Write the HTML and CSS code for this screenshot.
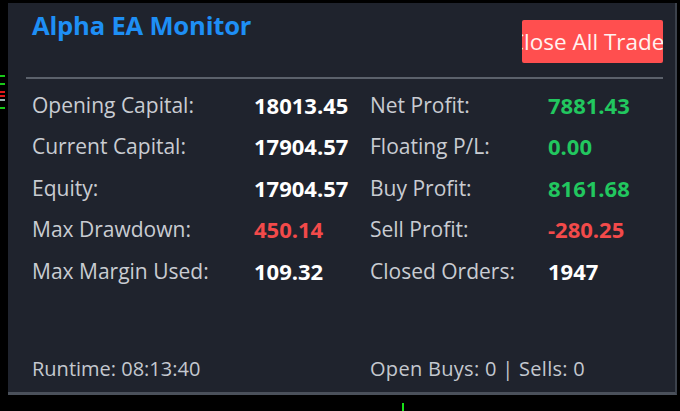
FILE: index.html
```html
<!DOCTYPE html>
<html>
<head>
<meta charset="utf-8">
<link rel="stylesheet" href="styles.css">
</head>
<body>
<div class="chart">
  <div class="ticks">
    <span class="tick g"></span>
    <span class="tick g"></span>
    <span class="tick r"></span>
    <span class="tick r"></span>
    <span class="tick w"></span>
    <span class="tick g"></span>
  </div>
  <div class="panel">
    <div class="header">
      <div class="title">Alpha EA Monitor</div>
      <div class="btn"><span>Close All Trades</span></div>
    </div>
    <div class="sep"></div>
    <div class="grid">
      <div class="lbl">Opening Capital:</div><div class="val">18013.45</div>
      <div class="lbl">Net Profit:</div><div class="val green">7881.43</div>
      <div class="lbl">Current Capital:</div><div class="val">17904.57</div>
      <div class="lbl">Floating P/L:</div><div class="val green">0.00</div>
      <div class="lbl">Equity:</div><div class="val">17904.57</div>
      <div class="lbl">Buy Profit:</div><div class="val green">8161.68</div>
      <div class="lbl">Max Drawdown:</div><div class="val red">450.14</div>
      <div class="lbl">Sell Profit:</div><div class="val red">-280.25</div>
      <div class="lbl">Max Margin Used:</div><div class="val">109.32</div>
      <div class="lbl">Closed Orders:</div><div class="val">1947</div>
    </div>
    <div class="footer">
      <div class="foot1">Runtime: 08:13:40</div>
      <div class="foot2">Open Buys: 0 | Sells: 0</div>
    </div>
  </div>
  <span class="btick"></span>
</div>
</body>
</html>
```
FILE: styles.css
```css
html, body {
  margin: 0;
  padding: 0;
  background: #000;
  width: 680px;
  height: 411px;
  overflow: hidden;
}
.chart {
  position: relative;
  width: 680px;
  height: 411px;
  padding-top: 3px;
  padding-left: 8px;
  box-sizing: border-box;
  font-family: "Open Sans", "DejaVu Sans", sans-serif;
}
.ticks {
  position: absolute;
  left: 0;
  top: 75px;
  width: 5px;
}
.tick {
  display: block;
  height: 2px;
  width: 5px;
  margin-bottom: 6px;
}
.tick.g { background: #18c918; }
.tick.r { background: #e01818; margin-bottom: 2px; }
.tick.w { background: #9aa; }
.btick {
  position: absolute;
  left: 402px;
  top: 403px;
  width: 2px;
  height: 8px;
  background: #18e018;
}
.panel {
  width: 669px;
  height: 392px;
  box-sizing: border-box;
  background: #1f232d;
  border-right: 2px solid #3c424c;
  border-bottom: 3px solid #4a505a;
  padding: 0 12px 0 18px;
  display: flex;
  flex-direction: column;
}
.header {
  display: flex;
  justify-content: space-between;
  align-items: flex-start;
  height: 74px;
  padding-left: 6px;
}
.title {
  color: #1e8ff5;
  font-weight: 700;
  font-size: 25.6px;
  line-height: 35px;
  margin-top: 5px;
  letter-spacing: -0.2px;
}
.btn {
  margin-top: 17px;
  width: 141px;
  height: 43px;
  background: #ff4f4f;
  border-radius: 2px;
  overflow: hidden;
  display: flex;
  justify-content: center;
  align-items: center;
}
.btn span {
  color: #fff2f0;
  font-size: 22.5px;
  white-space: nowrap;
}
.sep {
  height: 2px;
  background: #5b616b;
  margin-left: 0;
}
.grid {
  display: grid;
  grid-template-columns: 222px 116px 178px 1fr;
  grid-auto-rows: 41.5px;
  align-items: center;
  padding-left: 6px;
  padding-top: 5px;
}
.lbl {
  color: #c9ccd2;
  font-size: 21px;
}
.val {
  color: #ffffff;
  font-weight: 700;
  font-size: 22px;
}
.val.green { color: #22c75f; }
.val.red { color: #f24a4a; }
.footer {
  margin-top: auto;
  margin-bottom: 10px;
  display: flex;
  padding-left: 6px;
  color: #c4c8cf;
  font-size: 20px;
  line-height: 27px;
}
.foot1 { width: 338px; }
.foot2 { letter-spacing: 0.3px; }
```
